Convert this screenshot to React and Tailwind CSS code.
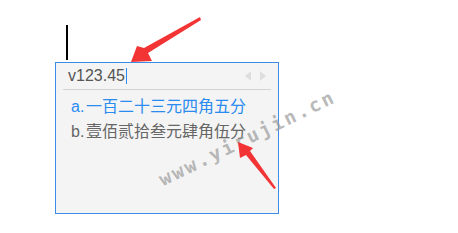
// App.jsx — input-method candidate box demo
const font = { fontFamily: '"Liberation Sans", "Noto Sans CJK SC", sans-serif' };

function Candidate({ label, text, active }) {
    return (
        <div className={`flex items-center h-[25px] text-[16px] ${active ? 'text-[#2a8cf0]' : 'text-[#666]'}`}>
            <span className="w-[15px]">{label}</span>
            <span>{text}</span>
        </div>
    );
}

export default function App() {
    return (
        <div className="relative w-[458px] h-[233px] bg-white overflow-hidden" style={font}>
            <div className="pl-[66px] pt-[25px]">
                <div className="w-[2px] h-[35px] bg-black" />
            </div>

            <div className="ml-[55px] mt-[2px] w-[224px] h-[152px] border border-[#3b8de8] bg-[#f4f4f4]">
                <div className="flex items-center justify-between h-[26px] pl-[12px] pr-[12px]">
                    <div className="flex items-center text-[16px] text-[#555]">
                        <span>v123.45</span>
                        <span className="w-[1px] h-[16px] bg-[#2a8cf0] ml-[1px]" />
                    </div>
                    <div className="flex items-center gap-[9px]">
                        <svg width="6" height="10" viewBox="0 0 6 10"><polygon points="6,0 6,10 0,5" fill="#dedede" /></svg>
                        <svg width="6" height="10" viewBox="0 0 6 10"><polygon points="0,0 0,10 6,5" fill="#dedede" /></svg>
                    </div>
                </div>
                <div className="mx-[7px] h-[1px] bg-[#d4d4d4]" />
                <div className="pl-[15px] pt-[4px]">
                    <Candidate label="a." text="一百二十三元四角五分" active />
                    <Candidate label="b." text="壹佰贰拾叁元肆角伍分" />
                </div>
            </div>

            {/* watermark */}
            <div
                className="absolute left-[160px] top-[166px] leading-[28px] text-[19px] font-bold text-[#9a9a9a]/70 tracking-[2.4px] origin-left"
                style={{ transform: 'rotate(-26deg)', fontFamily: '"DejaVu Sans Mono", monospace' }}
            >
                www.yirujin.cn
            </div>

            {/* annotation arrows */}
            <svg className="absolute left-0 top-0" width="458" height="233" viewBox="0 0 458 233">
                <polygon points="200,17 201,20 148,53 152,61 131,62 137,46 144,48" fill="#f23434" />
                <polygon points="276,188 274,189 246,155 240,158 238,142 253,148 250,151" fill="#f23434" />
            </svg>
        </div>
    );
}
